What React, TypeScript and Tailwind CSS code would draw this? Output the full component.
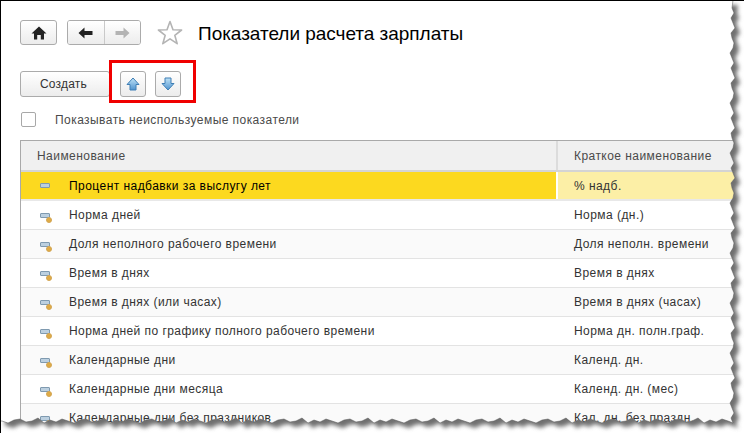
const rows = [
  ["Норма дней", "Норма (дн.)"],
  ["Доля неполного рабочего времени", "Доля неполн. времени"],
  ["Время в днях", "Время в днях"],
  ["Время в днях (или часах)", "Время в днях (часах)"],
  ["Норма дней по графику полного рабочего времени", "Норма дн. полн.граф."],
  ["Календарные дни", "Календ. дн."],
  ["Календарные дни месяца", "Календ. дн. (мес)"],
  ["Календарные дни без праздников", "Кал. дн. без праздн."],
];

// jagged edge of the torn paper
const tornPath = () => {
  let d = "M733 0";
  for (let y = 8, i = 0; y < 424; y += 5, i++) {
    const off = [0, 2, -1, 1, 3, -1, 0, 2, 1, -2][i % 10];
    d += ` L${732 + off} ${y}`;
  }
  for (let x = 728, i = 0; x > 0; x -= 6, i++) {
    const off = [0, -2, 1, -1, 2, -3, 0, 1, -2, -1, 2][i % 11];
    d += ` L${x} ${421 + off}`;
  }
  return d + " L0 421";
};

const TornEdge = () => {
  const edge = tornPath();
  const outside = `${edge} L0 433 L744 433 L744 0 Z`;
  return (
    <svg className="absolute left-[-1px] top-[-1px]" width="744" height="433">
      <defs>
        <filter id="blur" x="-5%" y="-5%" width="110%" height="110%">
          <feGaussianBlur stdDeviation="2" />
        </filter>
        <clipPath id="out">
          <path d={outside} />
        </clipPath>
      </defs>
      <path d={outside} fill="#ffffff" />
      <g clipPath="url(#out)">
        <g transform="translate(5 5)" filter="url(#blur)">
          <path d={edge + " L0 0 Z"} fill="#707070" />
        </g>
      </g>
      <path d={edge} fill="none" stroke="#555555" strokeWidth="0.5" />
    </svg>
  );
};

const NavButton = ({ className, children }: { className: string; children: React.ReactNode }) => (
  <div className={`flex items-center justify-center bg-gradient-to-b from-white to-[#ececec] ${className}`}>{children}</div>
);

const Star = () => (
  <svg width="26" height="26" viewBox="0 0 26 26">
    <path d="M13 1.5 L16 9.7 L24.6 10 L17.8 15.3 L20.2 23.7 L13 18.8 L5.8 23.7 L8.2 15.3 L1.4 10 L10 9.7 Z" fill="#ffffff" stroke="#b4b4b4" strokeWidth="1.6" strokeLinejoin="round" />
  </svg>
);

const BlueArrow = ({ down }: { down?: boolean }) => (
  <svg width="14" height="14" viewBox="0 0 14 14" className={down ? "rotate-180" : ""}>
    <defs>
      <linearGradient id={down ? "ad" : "au"} x1="0" y1="0" x2="0" y2="1">
        <stop offset="0" stopColor={down ? "#4f93cf" : "#bfe3f7"} />
        <stop offset="1" stopColor={down ? "#bfe3f7" : "#4f93cf"} />
      </linearGradient>
    </defs>
    <path d="M7 1 L13 7.5 L10 7.5 L10 13 L4 13 L4 7.5 L1 7.5 Z" fill={`url(#${down ? "ad" : "au"})`} stroke="#3f7fb5" strokeWidth="1" strokeLinejoin="round" />
  </svg>
);

const RowIcon = ({ dot }: { dot?: boolean }) => (
  <div className="relative w-[10px] h-[5px] rounded-[1px] border border-[#7f9ab0] bg-[#bcd0e0]">
    {dot && <div className="absolute left-[5px] top-[3px] w-[6px] h-[6px] rounded-full bg-[#e0ab45] border border-[#d3a656]" />}
  </div>
);

export default function App() {
  return (
    <div className="relative w-[744px] h-[433px] overflow-hidden bg-white border-t border-l border-black font-['Liberation_Sans',Arial,sans-serif] text-[12px] text-[#333333]">
      <div className="flex flex-col pl-[19px] pt-[19px] w-[760px]">
        <div className="flex items-center h-[25px]">
          <NavButton className="w-[37px] h-[25px] rounded-[3px] border border-[#ababab]">
            <svg width="16" height="14" viewBox="0 0 16 14">
              <path d="M8 0.5 L15.5 7.5 L13 7.5 L13 13.5 L9.8 13.5 L9.8 9 L6.2 9 L6.2 13.5 L3 13.5 L3 7.5 L0.5 7.5 Z" fill="#222222" />
            </svg>
          </NavButton>
          <div className="flex ml-[10px] w-[74px] h-[25px] rounded-[3px] border border-[#ababab] overflow-hidden">
            <NavButton className="w-[37px] border-r border-[#c9c9c9] pr-[2px]">
              <svg width="15" height="12" viewBox="0 0 15 12"><path d="M0.5 6 L6.5 0.5 L6.5 4 L14.5 4 L14.5 8 L6.5 8 L6.5 11.5 Z" fill="#222222" /></svg>
            </NavButton>
            <NavButton className="flex-1">
              <svg width="15" height="12" viewBox="0 0 15 12"><path d="M14.5 6 L8.5 0.5 L8.5 4 L0.5 4 L0.5 8 L8.5 8 L8.5 11.5 Z" fill="#b4b4b4" /></svg>
            </NavButton>
          </div>
          <div className="ml-[16px]"><Star /></div>
          <div className="ml-[15px] mt-[3px] text-[19px] tracking-[-0.03px] text-black whitespace-nowrap">Показатели расчета зарплаты</div>
        </div>

        <div className="flex mt-[26px] h-[26px]">
          <NavButton className="w-[90px] rounded-[3px] border border-[#ababab] pr-[3px] tracking-[0.2px] text-[#333333]">Создать</NavButton>
          <NavButton className="ml-[10px] w-[26px] rounded-[3px] border border-[#ababab]"><BlueArrow /></NavButton>
          <NavButton className="ml-[9px] w-[26px] rounded-[3px] border border-[#ababab]"><BlueArrow down /></NavButton>
        </div>

        <div className="flex items-center mt-[15px] h-[15px]">
          <div className="ml-[1px] w-[15px] h-[15px] rounded-[2px] border border-[#a8a8a8] bg-white" />
          <div className="ml-[19px] tracking-[0.44px] text-[#4a4a4a]">Показывать неиспользуемые показатели</div>
        </div>

        <div className="mt-[13px] border-t border-l border-[#a9a9a9] tracking-[0.45px]">
          <div className="flex h-[31px] bg-[#f0f0f0] border-b-2 border-[#d4d4d4] text-[#4a4a4a]">
            <div className="flex items-center w-[537px] pl-[16px] border-r-2 border-[#dcdcdc]">Наименование</div>
            <div className="flex items-center pl-[16px]">Краткое наименование</div>
          </div>
          <div className="flex h-[29px] border-b-2 border-[#e8e8e8] text-black">
            <div className="flex items-center w-[537px] bg-[#fcd91f] pl-[19px] border-r-2 border-white">
              <RowIcon />
              <span className="ml-[19px]">Процент надбавки за выслугу лет</span>
            </div>
            <div className="flex flex-1 items-center pl-[16px] bg-[#fcefa6] text-[#333333]">% надб.</div>
          </div>
          {rows.map((row, i) => (
            <div key={row[0]} className={`flex h-[29px] border-b border-[#e3e3e3] ${i % 2 === 1 ? "bg-[#fafafa]" : "bg-white"}`}>
              <div className="flex items-center w-[537px] pl-[19px]">
                <RowIcon dot />
                <span className="ml-[19px] whitespace-nowrap">{row[0]}</span>
              </div>
              <div className="flex items-center pl-[16px] whitespace-nowrap">{row[1]}</div>
            </div>
          ))}
        </div>
      </div>

      <div className="absolute left-[108px] top-[59px] w-[87px] h-[43px] border-[3px] border-[#f00000]" />
      <TornEdge />
    </div>
  );
}
